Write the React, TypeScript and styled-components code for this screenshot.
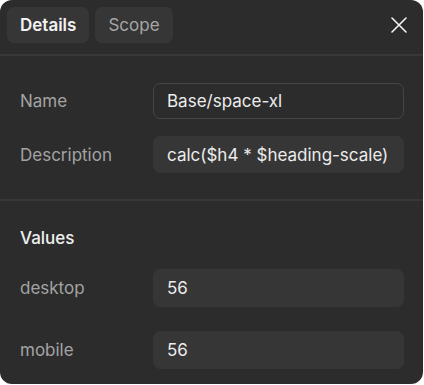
import React from "react";
import styled, { createGlobalStyle } from "styled-components";

const Global = createGlobalStyle`
  html, body { margin: 0; padding: 0; background: #ffffff; }
  body { font-family: Inter, "Noto Sans", sans-serif; -webkit-font-smoothing: antialiased; }
`;

const Panel = styled.div`
  width: 423px;
  height: 384px;
  background: #2c2c2c;
  border-radius: 12px;
  overflow: hidden;
  display: flex;
  flex-direction: column;
  box-sizing: border-box;
`;

const Header = styled.div`
  height: 56px;
  box-sizing: border-box;
  padding: 7px 16px 0 7px;
  display: flex;
  align-items: flex-start;
  gap: 6px;
  border-bottom: 2px solid #383838;
`;

const Tab = styled.button<{ $active?: boolean }>`
  height: 36px;
  padding: 0 13px;
  border: none;
  border-radius: 7px;
  background: #363636;
  color: ${(p) => (p.$active ? "#f2f2f2" : "#a6a6a6")};
  font-family: Inter, sans-serif;
  font-size: 17px;
  font-weight: ${(p) => (p.$active ? 600 : 400)};
  cursor: pointer;
`;

const Spacer = styled.div`
  flex: 1;
`;

const Close = styled.button`
  margin-top: 10px;
  width: 16px;
  height: 16px;
  padding: 0;
  border: none;
  background: transparent;
  display: flex;
  align-items: center;
  justify-content: center;
`;

const DetailsSection = styled.div`
  display: flex;
  flex-direction: column;
  gap: 17px;
  padding: 27px 19px 0 20px;
  height: 145px;
  box-sizing: border-box;
  border-bottom: 2px solid #383838;
`;

const ValuesSection = styled.div`
  display: flex;
  flex-direction: column;
  padding: 27px 19px 0 20px;
`;

const RowList = styled.div`
  display: flex;
  flex-direction: column;
  gap: 24px;
`;

const Row = styled.div`
  display: grid;
  grid-template-columns: 133px 1fr;
  align-items: center;
`;

const Label = styled.span`
  color: #a3a3a3;
  font-size: 17px;
`;

const Field = styled.div<{ $bordered?: boolean; $h: number }>`
  height: ${(p) => p.$h}px;
  box-sizing: border-box;
  border-radius: 7px;
  display: flex;
  align-items: center;
  padding: 0 13px;
  font-size: 17px;
  color: #ececec;
  background: ${(p) => (p.$bordered ? "#2c2c2c" : "#363636")};
  border: 1px solid ${(p) => (p.$bordered ? "#454545" : "#363636")};
`;

const Heading = styled.div`
  color: #f0f0f0;
  font-size: 17px;
  font-weight: 500;
  height: 20px;
  line-height: 20px;
  margin-bottom: 21px;
`;

export default function App() {
  return (
    <>
      <Global />
      <Panel>
        <Header>
          <Tab $active>Details</Tab>
          <Tab>Scope</Tab>
          <Spacer />
          <Close aria-label="Close">
            <svg width="16" height="16" viewBox="0 0 16 16" fill="none">
              <path d="M1 1L15 15M15 1L1 15" stroke="#f2f2f2" strokeWidth="1.6" strokeLinecap="round" />
            </svg>
          </Close>
        </Header>
        <DetailsSection>
          <Row>
            <Label>Name</Label>
            <Field $bordered $h={36}>Base/space-xl</Field>
          </Row>
          <Row>
            <Label>Description</Label>
            <Field $h={37}>calc($h4 * $heading-scale)</Field>
          </Row>
        </DetailsSection>
        <ValuesSection>
          <Heading>Values</Heading>
          <RowList>
            <Row>
              <Label>desktop</Label>
              <Field $h={38}>56</Field>
            </Row>
            <Row>
              <Label>mobile</Label>
              <Field $h={38}>56</Field>
            </Row>
          </RowList>
        </ValuesSection>
      </Panel>
    </>
  );
}
